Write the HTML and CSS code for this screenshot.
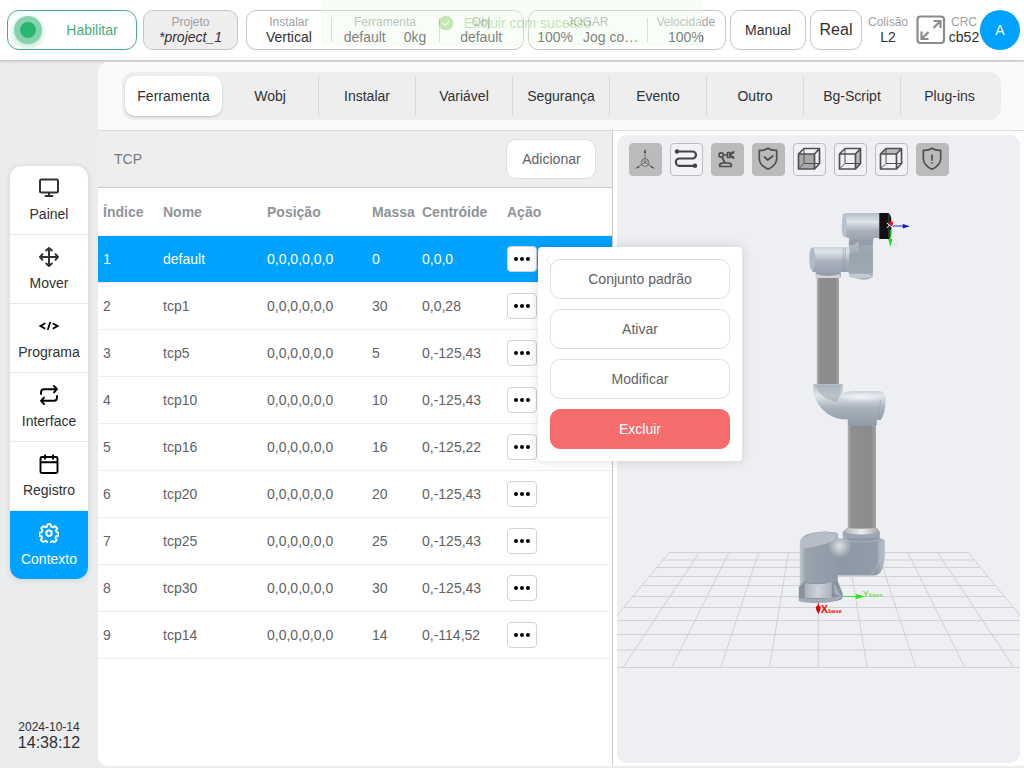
FILE: index.html
```html
<!DOCTYPE html>
<html lang="pt">
<head>
<meta charset="utf-8">
<title>Contexto - Ferramenta</title>
<link rel="stylesheet" href="styles.css">
</head>
<body>
<div class="app">
  <header class="topbar">
    <button class="enable" type="button"><span class="lamp"></span><span class="enable-label">Habilitar</span></button>
    <button class="box project" type="button"><small>Projeto</small><em>*project_1</em></button>
    <div class="box group setup">
      <div class="stat"><small>Instalar</small><span>Vertical</span></div>
      <div class="stat wide"><small>Ferramenta</small><span class="pair"><span>default</span><span>0kg</span></span></div>
      <div class="stat"><small>Obj</small><span>default</span></div>
    </div>
    <div class="box group jog">
      <div class="stat wide"><small>JOGAR</small><span class="pair tight"><span>100%</span><span>Jog co…</span></span></div>
      <div class="stat"><small>Velocidade</small><span>100%</span></div>
    </div>
    <button class="box manual" type="button">Manual</button>
    <button class="box real" type="button">Real</button>
    <div class="info"><small>Colisão</small><span>L2</span></div>
    <button class="expand" type="button" aria-label="Tela cheia">
      <svg viewBox="0 0 30 30" width="30" height="30"><g fill="none" stroke="#8c8c8c" stroke-width="2.200"><rect x="1.500" y="1.500" width="26.500" height="26.500" rx="3"/><path d="M17.500 6h7v7M24.500 6l-7 7M5.500 16.500v7.500h7M5.500 24l7-7"/></g></svg>
    </button>
    <div class="info crc"><small>CRC</small><span>cb52</span></div>
    <button class="avatar" type="button">A</button>
  </header>

  <div class="body">
    <aside class="side">
      <nav class="menu">
        <a class="item" href="#painel"><svg viewBox="0 0 20 20"><g fill="none" stroke="#303133" stroke-width="2"><rect x="1" y="1.500" width="18" height="13" rx="1.500"/><path d="M10 15v3M6.500 18h7" stroke-linecap="round"/></g></svg><span>Painel</span></a>
        <a class="item" href="#mover"><svg viewBox="0 0 20 20"><path fill="none" stroke="#303133" stroke-width="2" stroke-linecap="round" stroke-linejoin="round" d="M10 1v18M1 10h18M7.200 3.500 10 1l2.800 2.500M7.200 16.500 10 19l2.800-2.500M3.500 7.200 1 10l2.500 2.800M16.500 7.200 19 10l-2.500 2.800"/></svg><span>Mover</span></a>
        <a class="item" href="#programa"><svg viewBox="0 0 20 20"><path fill="none" stroke="#000" stroke-width="1.700" d="M6.300 7.300 1.500 10l4.800 2.700M13.700 7.300l4.800 2.700-4.800 2.700M11.300 6 8.700 14"/></svg><span>Programa</span></a>
        <a class="item" href="#interface"><svg viewBox="0 0 20 20"><path fill="none" stroke="#000" stroke-width="1.900" stroke-linecap="round" stroke-linejoin="round" d="M2 9V7.500Q2 4.200 5 4.200H18M15 1l3 3.200L15 7.400M18 11v1.500q0 3.300-3 3.300H2M5 12.600l-3 3.200L5 19"/></svg><span>Interface</span></a>
        <a class="item" href="#registro"><svg viewBox="0 0 20 20"><g fill="none" stroke="#000" stroke-width="1.900"><rect x="1.500" y="3" width="17" height="16" rx="1.500"/><path d="M1.500 8.200h17M6 .5v5M14 .5v5"/></g></svg><span>Registro</span></a>
        <a class="item active" href="#contexto"><svg viewBox="0 0 24 24"><path fill="none" stroke="#fff" stroke-width="2.300" stroke-linejoin="round" d="M10.200 1.500h3.600l.8 2.900 2 .8 2.600-1.500 2.600 2.600-1.500 2.600.8 2 2.400.8v3.600l-2.900.6-.8 2 1.500 2.600-2.600 2.500-2.600-1.400-1.500.7-.8 2.700h-3.600l-.8-2.900-2-.8-2.600 1.500-2.600-2.600 1.500-2.600-.8-1.700-2.400-.6v-3.600l2.900-.8.8-2-1.500-2.600 2.600-2.600 2.600 1.500 1.500-.6z"/><circle cx="12" cy="12.200" r="3.300" fill="none" stroke="#fff" stroke-width="2.300"/></svg><span>Contexto</span></a>
      </nav>
      <div class="clock"><span class="date">2024-10-14</span><span class="time">14:38:12</span></div>
    </aside>

    <main class="content">
      <div class="tabs-bar">
        <nav class="tabs">
          <button class="tab active" type="button">Ferramenta</button>
          <button class="tab" type="button">Wobj</button>
          <button class="tab" type="button">Instalar</button>
          <button class="tab" type="button">Variável</button>
          <button class="tab" type="button">Segurança</button>
          <button class="tab" type="button">Evento</button>
          <button class="tab" type="button">Outro</button>
          <button class="tab" type="button">Bg-Script</button>
          <button class="tab" type="button">Plug-ins</button>
        </nav>
      </div>
      <div class="split">
        <section class="list">
          <div class="list-head"><span>TCP</span><button class="btn add" type="button">Adicionar</button></div>
          <table class="grid">
            <colgroup><col class="c-index"><col class="c-name"><col class="c-pos"><col class="c-mass"><col class="c-cen"><col class="c-act"></colgroup>
            <thead><tr><th>Índice</th><th>Nome</th><th>Posição</th><th>Massa</th><th>Centróide</th><th>Ação</th></tr></thead>
            <tbody>
              <tr class="selected"><td>1</td><td>default</td><td>0,0,0,0,0,0</td><td>0</td><td>0,0,0</td><td>
                <div class="action"><button class="more" type="button" aria-label="Ações"><i></i><i></i><i></i></button>
                  <div class="popover">
                    <svg class="notch" viewBox="0 0 6 12"><path d="M6 1 1 6l5 5" fill="none" stroke="#e4e7ed"/></svg>
                    <button class="btn" type="button">Conjunto padrão</button>
                    <button class="btn" type="button">Ativar</button>
                    <button class="btn" type="button">Modificar</button>
                    <button class="btn danger" type="button">Excluir</button>
                  </div>
                </div></td></tr>
              <tr><td>2</td><td>tcp1</td><td>0,0,0,0,0,0</td><td>30</td><td>0,0,28</td><td><button class="more" type="button" aria-label="Ações"><i></i><i></i><i></i></button></td></tr>
              <tr><td>3</td><td>tcp5</td><td>0,0,0,0,0,0</td><td>5</td><td>0,-125,43</td><td><button class="more" type="button" aria-label="Ações"><i></i><i></i><i></i></button></td></tr>
              <tr><td>4</td><td>tcp10</td><td>0,0,0,0,0,0</td><td>10</td><td>0,-125,43</td><td><button class="more" type="button" aria-label="Ações"><i></i><i></i><i></i></button></td></tr>
              <tr><td>5</td><td>tcp16</td><td>0,0,0,0,0,0</td><td>16</td><td>0,-125,22</td><td><button class="more" type="button" aria-label="Ações"><i></i><i></i><i></i></button></td></tr>
              <tr><td>6</td><td>tcp20</td><td>0,0,0,0,0,0</td><td>20</td><td>0,-125,43</td><td><button class="more" type="button" aria-label="Ações"><i></i><i></i><i></i></button></td></tr>
              <tr><td>7</td><td>tcp25</td><td>0,0,0,0,0,0</td><td>25</td><td>0,-125,43</td><td><button class="more" type="button" aria-label="Ações"><i></i><i></i><i></i></button></td></tr>
              <tr><td>8</td><td>tcp30</td><td>0,0,0,0,0,0</td><td>30</td><td>0,-125,43</td><td><button class="more" type="button" aria-label="Ações"><i></i><i></i><i></i></button></td></tr>
              <tr><td>9</td><td>tcp14</td><td>0,0,0,0,0,0</td><td>14</td><td>0,-114,52</td><td><button class="more" type="button" aria-label="Ações"><i></i><i></i><i></i></button></td></tr>
            </tbody>
          </table>
        </section>

        <section class="scene">
          <svg class="canvas" viewBox="617 135 403 628" preserveAspectRatio="xMidYMid slice" role="img" aria-label="Robô">
            <defs>
              <linearGradient id="h" x1="0" y1="0" x2="0" y2="1"><stop offset="0" stop-color="#b4bcc6"/><stop offset=".28" stop-color="#dfe4e9"/><stop offset=".55" stop-color="#a9b2bd"/><stop offset="1" stop-color="#8f99a5"/></linearGradient>
              <linearGradient id="v" x1="0" y1="0" x2="1" y2="0"><stop offset="0" stop-color="#b5bdc6"/><stop offset=".4" stop-color="#9aa4af"/><stop offset="1" stop-color="#a9b2bc"/></linearGradient>
              <linearGradient id="vf" x1="0" y1="0" x2="0" y2="1"><stop offset="0" stop-color="#9aa4af" stop-opacity="0"/><stop offset=".5" stop-color="#9aa4af"/><stop offset="1" stop-color="#9fa8b3"/></linearGradient>
              <linearGradient id="t" x1="0" y1="0" x2="1" y2="0"><stop offset="0" stop-color="#b5b5b5"/><stop offset=".12" stop-color="#8f8f8f"/><stop offset=".85" stop-color="#8b8b8b"/><stop offset=".93" stop-color="#9c9c9c"/><stop offset="1" stop-color="#8a8a8a"/></linearGradient>
              <linearGradient id="w" x1="0" y1="0" x2="1" y2="0"><stop offset="0" stop-color="#b0b0b0"/><stop offset=".5" stop-color="#ededed"/><stop offset="1" stop-color="#a4a4a4"/></linearGradient>
              <linearGradient id="b" x1="0" y1="0" x2="1" y2="0"><stop offset="0" stop-color="#c3cad2"/><stop offset=".07" stop-color="#99a3ae"/><stop offset=".5" stop-color="#8e98a4"/><stop offset=".9" stop-color="#929ca8"/><stop offset="1" stop-color="#b3bbc4"/></linearGradient>
              <linearGradient id="f" x1="0" y1="0" x2="1" y2="0"><stop offset="0" stop-color="#a9b2bc"/><stop offset=".5" stop-color="#ced3da"/><stop offset="1" stop-color="#a9b2bc"/></linearGradient>
              <radialGradient id="s"><stop offset="0" stop-color="#f3f5f8"/><stop offset="1" stop-color="#f3f5f8" stop-opacity="0"/></radialGradient>
            </defs>
            <g stroke="#d0d1d3" fill="none">
              <path d="M669.500 552.500H968.500M657 567.500H980M650 576.500H988M642 585.500H996M633 596.500H1005M624 607.500H1014M500 620.500H1140M500 634.500H1140M500 667.500H1140"/>
              <path stroke="#dfe0e4" stroke-width="2" d="M663 560H975M500 650H1140"/>
              <path d="M669.500 552.500 574 667.500M699.300 552.500 623 667.500M729.100 552.500 672 667.500M758.900 552.500 721 667.500M788.700 552.500 769.700 667.500M818.500 552.500V667.500M848.300 552.500 867.400 667.500M878.100 552.500 916.200 667.500M907.900 552.500 965 667.500M937.700 552.500 1014 667.500M968.500 552.500 1063 667.500"/>
            </g>
            <path d="M849 235h24v42q-6 4-13 2-9-1-11-5z" fill="url(#v)"/>
            <ellipse cx="860.500" cy="276" rx="11.500" ry="2.500" fill="#c3cad2"/>
            <path d="M843 214q2-1 5-1h33v25h-7q-1 4-1 7h-24q0-4 1.500-7l-4-.5q-5-9-3.500-23.500z" fill="url(#h)"/>
            <ellipse cx="844.500" cy="226" rx="2.500" ry="11.500" fill="#b9c1ca"/>
            <path d="M811 248q2-1 5-1h35l8-6v31h-18v5q-12 3-25 0v-5h-3q-5-12-2-24z" fill="url(#h)"/>
            <ellipse cx="812.500" cy="259" rx="3" ry="11.500" fill="#b2bac4"/>
            <path d="M850 236h23v37h-24z" fill="url(#vf)"/>
            <path d="M843.500 248v24M845.500 248v24M850 241h22" stroke="#8993a0" stroke-width=".5"/>
            <path d="M879.500 213h9q2 1 3 5v17l-2 4h-10z" fill="#111"/>
            <path d="M889 213v25" stroke="#444" stroke-width="1"/>
            <path d="M887 223l5 4M887 228l4-4" stroke="#fff"/><path d="M889 223l4-1-1 4z" fill="#e81313" stroke="#e81313"/>
            <path d="M893 226h11" stroke="#2626dd"/><path d="M903 224v4.500l7-2.200z" fill="#1717bf"/>
            <path d="M890.500 230v10" stroke="#28e128"/><path d="M888.500 239h4l-2 8z" fill="#19dd19"/><path d="M893 243l4 4M897 243l-3 2" stroke="#d3d5d8"/>
            <path d="M816 274q12 4 24 0v4h-24z" fill="#d2d5d9"/>
            <rect x="817" y="278" width="22" height="107" fill="url(#t)"/>
            <path d="M813.500 384h29.500v9q4-1.500 9-2h28q5 1 6 7-.3 16-5 22h-4v5q-14 3-29 1v-6.500q-12 0-20-5.500-11-8-14.500-21z" fill="url(#h)"/>
            <path d="M816 385h25v9l-4 8q-17-3-21-17z" fill="#a3acb7" opacity=".6"/>
            <ellipse cx="861" cy="397" rx="22" ry="5" fill="url(#s)"/>
            <path d="M881 400l-3 19M848 422q14 3 29 0" fill="none" stroke="#98a2ad" stroke-width=".6"/>
            <path d="M848 425q14 2 28 0v103h-28z" fill="url(#t)"/>
            <path d="M847 528h30l3 4v8h-37v-8z" fill="#9ca5b0"/>
            <path d="M847 528q14 2 30 0l3 4q-18 5-37 0z" fill="url(#w)"/>
            <path d="M800 541q2-6 12-8 14-3 26 0v5q3 1 5 0h37l5 2v15q-1 16-6 19-2 1.500-8 1.500h-33v7l-1 4h-37z" fill="url(#b)"/>
            <path d="M801 543q1-8 14-10 11-2 23 0-2 9-17 12-14 4-20 3z" fill="#b5bdc7"/>
            <circle cx="840" cy="546" r="12" fill="url(#s)" opacity=".8"/>
            <path d="M884 540v15l-3 14q-4-14-3-27z" fill="#bdc4cd" opacity=".4"/>
            <path d="M884 550q-6 17-13 25M843 540q18 4 37 0" fill="none" stroke="#b9c1c9" stroke-width=".6"/>
            <path d="M804 582q17 3 34-1l5 13q1 5-3 6-12 4-41 0v-13z" fill="#8993a0"/>
            <path d="M805 583q15 3 27-1v16h-27z" fill="url(#f)"/>
            <path d="M834 583l7 13-6-2z" fill="#a9b2bc"/>
            <path d="M799 598q26 3 44-3l-1 3q-8 5-24 5-13 0-19-2z" fill="#a1aab5"/>
            <path d="M843 596.500h13" stroke="#28f128"/><path d="M856 594l9 2.500-9 2.500z" fill="#15e815"/>
            <path d="M818.500 603v5" stroke="#e00000"/><path d="M816 607l2.500-2 2.500 2-.5 3-2 4-2-4z" fill="#e00000"/>
            <text x="863" y="597" class="axis-y">Y<tspan class="sub">base</tspan></text>
            <text x="821" y="613" class="axis-x">X<tspan class="sub">base</tspan></text>
          </svg>
          <div class="tools">
            <button class="tool on" type="button" aria-label="Eixos"><svg viewBox="0 0 33 33"><g fill="none" stroke="#666" stroke-width=".8"><path d="M16 19.500V7M16 19.500 7 25M16 19.500l9 5.500"/><circle cx="16" cy="19.500" r="4"/><path d="M13 17.500l3 2 3-2"/></g><path fill="#444" d="M15 10l1-4.500 1 4.500zM6 26l4-3 .6 1.200zM26 26l-4-3-.6 1.200z"/></svg></button>
            <button class="tool" type="button" aria-label="Trajetória"><svg viewBox="0 0 33 33"><path fill="none" stroke="#444" stroke-width="2.200" d="M7 8.500h15.500a3.500 3.500 0 0 1 0 7H9.500a3.600 3.600 0 0 0 0 7.300H25"/><circle cx="7" cy="8.500" r="2.200" fill="#444"/><circle cx="25" cy="22.800" r="2.200" fill="#444"/></svg></button>
            <button class="tool on" type="button" aria-label="Braço"><svg viewBox="0 0 33 33"><g fill="none" stroke="#4d4d4d" stroke-width="1.700" stroke-linejoin="round"><path d="M8.700 23.500v-2l2-1.500h7.600l2 1.500v2z"/><circle cx="10.200" cy="12" r="2.200"/><path d="M11 14l3 6M12.500 12H16.500M16.500 9.500v5h2.500v-5zM19 12h1.500M23.500 9h-1.500q-2 1-2 3t2 3h1.500M22 9v2M22 13v2"/></g></svg></button>
            <button class="tool on" type="button" aria-label="Proteção"><svg viewBox="0 0 33 33"><path fill="none" stroke="#505050" stroke-width="1.700" stroke-linejoin="round" stroke-linecap="round" d="M16 5.200q-3.500 2.600-8.700 2.200V16q.5 6.500 8.700 10.300Q24.200 22.500 24.700 16V7.400Q19.500 7.800 16 5.200zM12.500 14l3.300 3 5-4"/></svg></button>
            <button class="tool" type="button" aria-label="Vista frontal"><svg viewBox="0 0 33 33"><path fill="#aaa" d="M5.500 11h16v15h-16z"/><path fill="none" stroke="#505050" stroke-width="1" d="M11 5.500v15h15.500M11 20.500l-5.500 5.500"/><path fill="none" stroke="#505050" stroke-width="1.700" stroke-linejoin="round" d="M5.500 11h16v15h-16zM5.500 11 11 5.500h15.500L21.500 11M26.500 5.500v15l-5 5.500"/></svg></button>
            <button class="tool" type="button" aria-label="Vista lateral"><svg viewBox="0 0 33 33"><path fill="#bbb" d="M21.500 11l5-5.500v15l-5 5.500z"/><path fill="none" stroke="#505050" stroke-width="1" d="M11 5.500v15h15.500M11 20.500l-5.500 5.500"/><path fill="none" stroke="#505050" stroke-width="1.700" stroke-linejoin="round" d="M5.500 11h16v15h-16zM5.500 11 11 5.500h15.500L21.500 11M26.500 5.500v15l-5 5.500"/></svg></button>
            <button class="tool" type="button" aria-label="Vista superior"><svg viewBox="0 0 33 33"><path fill="#bbb" d="M5.500 11 11 5.500h15.500l-5 5.500z"/><path fill="none" stroke="#505050" stroke-width="1" d="M11 5.500v15h15.500M11 20.500l-5.500 5.500"/><path fill="none" stroke="#505050" stroke-width="1.700" stroke-linejoin="round" d="M5.500 11h16v15h-16zM5.500 11 11 5.500h15.500L21.500 11M26.500 5.500v15l-5 5.500"/></svg></button>
            <button class="tool on" type="button" aria-label="Aviso"><svg viewBox="0 0 33 33"><path fill="none" stroke="#505050" stroke-width="1.700" stroke-linejoin="round" stroke-linecap="round" d="M16 5.200q-3.500 2.600-8.700 2.200V16q.5 6.500 8.700 10.300Q24.200 22.500 24.700 16V7.400Q19.500 7.800 16 5.200zM16 12v5M16 19.800v.2"/></svg></button>
          </div>
        </section>
      </div>
    </main>
  </div>
</div>
<div class="toast" role="status">
  <svg viewBox="0 0 16 16"><circle cx="8" cy="8" r="7.300" fill="#67c23a"/><path d="M4.800 8.200l2.300 2.200 4.100-4.200" fill="none" stroke="#fff" stroke-width="1.200"/></svg>
  <span>Excluir com sucesso</span>
</div>
</body>
</html>
```
FILE: styles.css
```css
* { box-sizing: border-box; }

body {
  margin: 0;
  background: #ebecee;
  color: #303133;
  font: 14px/20px "Liberation Sans", Arial, sans-serif;
}

button { font: inherit; color: inherit; padding: 0; cursor: pointer; }
svg { display: block; }

.app { display: flex; flex-direction: column; min-height: 100vh; }

/* Top bar */
.topbar {
  display: flex;
  align-items: center;
  gap: 4px;
  height: 60px;
  padding: 0 4px 0 7px;
  background: #fff;
  box-shadow: 0 2px 2px rgba(0, 0, 0, 0.14);
}
.topbar small { font-size: 12px; line-height: 15px; color: #a0a0a4; }
.topbar .stat, .topbar .info, .topbar .project { line-height: 15px; white-space: nowrap; }

.enable {
  flex: 130 0 130px;
  display: flex;
  align-items: center;
  height: 40px;
  margin-right: 2px;
  padding: 0 6px;
  border: 1px solid #4cab80;
  border-radius: 12px;
  background: #fff;
  color: #4cab7c;
}
.lamp {
  width: 28px;
  height: 28px;
  border: 6px solid #86d3ae;
  border-radius: 50%;
  background: #2ab573;
  box-shadow: 0 2px 6px rgba(42, 181, 115, 0.4);
}
.enable-label { flex: 1; padding-left: 12px; }

.box {
  display: flex;
  align-items: center;
  justify-content: center;
  height: 40px;
  border: 1px solid #c4c4c6;
  border-radius: 10px;
  background: #fff;
}
.project { flex: 95 0 95px; flex-direction: column; margin-right: 4px; background: #eee; }
.group { align-items: stretch; }
.setup { flex: 278 0 278px; }
.jog { flex: 198 0 198px; }
.stat { position: relative; flex: 84 1 0; min-width: 0; display: flex; flex-direction: column; align-items: center; justify-content: center; }
.stat.wide { flex-grow: 109; }
.jog .stat.wide { flex-grow: 126; }
.stat + .stat::before { content: ""; position: absolute; left: 0; top: 7px; bottom: 7px; border-left: 1px solid #ccc; }
.pair { display: flex; gap: 18px; }
.pair.tight { gap: 10px; }
.manual { flex: 76 0 76px; }
.real { flex: 52 0 52px; font-size: 16px; }
.info { flex: none; width: 44px; display: flex; flex-direction: column; align-items: center; }
.info.crc { width: 32px; }
.expand { flex: none; border: 0; margin: 0 0 0 2px; background: none; }
.expand + .info { margin-left: -2px; }
.avatar { flex: none; width: 40px; height: 40px; margin-left: -4px; border: 0; border-radius: 50%; background: #00a2ff; color: #fff; }

/* Side menu */
.body { flex: 1; display: flex; padding: 2px 0; }
.side { flex: none; width: 98px; display: flex; flex-direction: column; justify-content: space-between; align-items: center; padding: 104px 0 14px; }
.menu { width: 78px; border-radius: 12px; overflow: hidden; background: #fff; box-shadow: 0 1px 6px rgba(0, 0, 0, 0.12); }
.item { display: flex; flex-direction: column; align-items: center; gap: 6px; padding: 12px 0 10px; border-bottom: 1px solid #e6e8ea; color: #303133; text-decoration: none; }
.item svg { width: 20px; height: 20px; }
.item.active { border: 0; background: #00a2ff; color: #fff; }
.clock { display: flex; flex-direction: column; align-items: center; }
.date { font-size: 12px; line-height: 14px; }
.time { font-size: 16px; line-height: 18px; }

/* Content */
.content { flex: 1; min-width: 0; display: flex; flex-direction: column; border-radius: 10px 0 0 10px; background: #fff; }
.tabs-bar { padding: 10px 23px 10px 24px; border-bottom: 1px solid #dcdcdc; border-radius: 10px 0 0 0; background: #fafafa; }
.tabs { display: grid; grid-template-columns: repeat(9, 1fr); padding: 4px 3px; border-radius: 12px; background: #eee; }
.tab { height: 40px; border: 0; border-right: 1px solid #d9d9d9; background: none; }
.tab:last-child { border: 0; }
.tab.active { border: 0; border-radius: 10px; background: #fff; box-shadow: 0 1px 2px rgba(0, 0, 0, 0.2); }

.split { flex: 1; display: flex; }
.list { flex: 515 1 0; min-width: 0; border-right: 1px solid #c8c8c8; border-radius: 0 0 0 10px; }
.list-head { display: flex; align-items: center; justify-content: space-between; padding: 8px 16px; border-bottom: 1px solid #ccc; background: #eee; color: #77797d; }

.btn { height: 40px; border: 1px solid #dcdfe6; border-radius: 10px; background: #fff; color: #606266; }
.add { width: 90px; }
.danger { border-color: #f56c6c; background: #f56c6c; color: #fff; }

.grid { width: 100%; table-layout: fixed; border-collapse: separate; border-spacing: 0; color: #606266; }
.c-index { width: 60px; }
.c-name { width: 104px; }
.c-pos { width: 105px; }
.c-mass { width: 50px; }
.c-cen { width: 85px; }
.grid th, .grid td { height: 47px; padding: 0 5px; text-align: left; white-space: nowrap; border-bottom: 1px solid #ebeef5; }
.grid th { height: 48px; color: #909399; }
.selected td { background: #00a2ff; color: #fff; }

.more { display: flex; align-items: center; justify-content: center; gap: 2px; width: 30px; height: 26px; border: 1px solid #d0d2d6; border-radius: 4px; background: #fff; }
.more i { width: 4px; height: 4px; border-radius: 50%; background: #000; }
.action { position: relative; width: 30px; }
.popover {
  position: absolute;
  z-index: 5;
  left: 31px;
  top: 1px;
  display: flex;
  flex-direction: column;
  gap: 10px;
  width: 204px;
  padding: 12px;
  border-radius: 4px;
  background: #fff;
  box-shadow: 0 0 12px rgba(0, 0, 0, 0.14);
}
.notch { position: absolute; left: 7px; top: 7px; width: 6px; height: 12px; }

/* Robot view */
.scene { position: relative; flex: 403 1 0; min-width: 0; margin: 4px 4px 3px; border-radius: 10px; overflow: hidden; background: #eeeff3; }
.canvas { position: absolute; inset: 0; width: 100%; height: 100%; }
.tools { position: relative; display: flex; flex-wrap: wrap; gap: 8px; padding: 8px 12px; }
.tool { width: 33px; height: 33px; border: 1px solid #bcbcbe; border-radius: 4px; background: #f1f2f5; }
.tool svg { width: 33px; height: 33px; margin: -1px; }
.tool.on { border-color: #bbb; background: #bbb; }
.axis-x { font-size: 11px; font-weight: bold; fill: #e01010; }
.axis-y { font-size: 9px; font-weight: bold; fill: #7bdc4b; }
.sub { font-size: 6px; }

/* Notification */
.toast {
  position: fixed;
  z-index: 10;
  top: 0;
  left: 50%;
  display: flex;
  align-items: center;
  justify-content: center;
  gap: 10px;
  width: 380px;
  height: 45px;
  margin-left: -190px;
  padding: 0 15px 0 20px;
  border: 1px solid #e1f3d8;
  border-radius: 4px;
  background: #f0f9eb;
  color: #67c23a;
  opacity: 0.4;
}
.toast svg { width: 16px; height: 16px; }
```
